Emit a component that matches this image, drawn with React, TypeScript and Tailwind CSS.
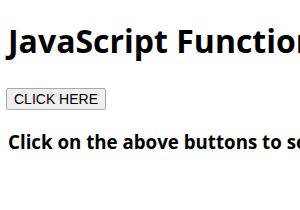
export default function App() {
  return (
    <div className="w-[300px] h-[210px] overflow-hidden bg-white px-2 pt-[20px] font-['Open_Sans',sans-serif] text-black">
      <h1 className="text-[32px] font-bold leading-[42px] whitespace-nowrap">JavaScript Functions</h1>
      <div className="mt-[24px]">
        <button className="ml-[-2px] h-[22px] px-[7px] border border-[#a9a9a9] rounded-[2px] bg-[#efefef] font-['Liberation_Sans',Arial,sans-serif] text-[14px] leading-[20px] text-black">
          CLICK HERE
        </button>
      </div>
      <p className="mt-[19px] text-[18.72px] font-bold leading-[26px] whitespace-nowrap">
        Click on the above buttons to see the output.
      </p>
    </div>
  );
}
